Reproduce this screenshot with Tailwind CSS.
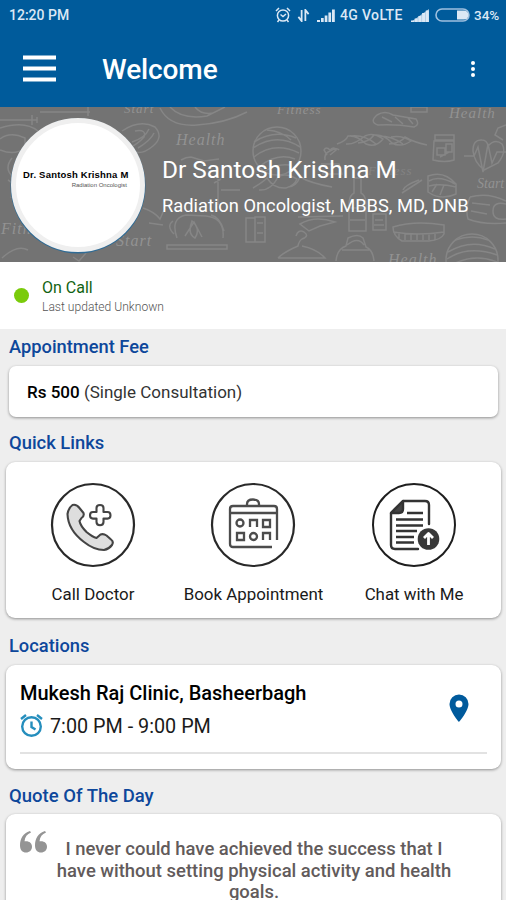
<!DOCTYPE html>
<html lang="en">
<head>
<meta charset="utf-8">
<title>Welcome</title>
<script src="https://cdn.jsdelivr.net/npm/@tailwindcss/browser@4"></script>
</head>
<body class="h-[900px] overflow-hidden bg-[#eeeeee] font-['Roboto',sans-serif] text-[#1a1a1a]">
<header class="h-[107px] bg-[#005b9b] text-white">
  <div class="flex h-[30px] items-center pl-[9px] text-[14px] font-medium text-[#dbe8f5]">
    <span class="w-[266px] whitespace-nowrap">12:20 PM</span>
    <svg class="h-4 w-4 shrink-0" viewBox="0 0 16 16" fill="none" stroke="currentColor" stroke-width="1.5"><circle cx="8" cy="8.5" r="5.6"/><path d="M1 4 4 1M15 4l-3-3M5.5 7.5 8 9.5l3-2.5M4 13l-1.500 2M12 13l1.500 2"/></svg>
    <svg class="ml-[6px] h-[13px] w-[13px] shrink-0" viewBox="0 0 13 14" fill="none" stroke="currentColor" stroke-width="1.900"><path d="M4.500 1v12L1 8.500M8.500 13V1L12 5.500"/></svg>
    <svg class="ml-[7px] h-[13px] w-[18px] shrink-0" viewBox="0 0 18 13" fill="currentColor"><path d="M0 11h3v2H0zM4 9h2.700v4H4zM7.700 6.500h2.700V13H7.700zM11.400 3.500h2.700V13h-2.700zM15 0.500h2.800V13H15z"/></svg>
    <span class="ml-[5px] w-[65px] whitespace-nowrap tracking-[0.35px]">4G VoLTE</span>
    <svg class="ml-[6px] h-[13px] w-[18px] shrink-0" viewBox="0 0 18 13" fill="currentColor"><path fill-opacity=".75" d="M0 13 18 0v13z"/><path d="M0 11.500h3V13H0zM3.700 9.500h3V13h-3zM7.400 7h3v6h-3zM11.100 4h3v9h-3zM14.800 1.500h3V13h-3z"/></svg>
    <svg class="ml-[6px] h-[14px] w-[35px] shrink-0" viewBox="0 0 35 14"><rect x="1" y="1" width="33" height="12" rx="6" fill="none" stroke="#9fc0df" stroke-width="1.600"/><path d="M22 2.500h7a4.500 4.500 0 0 1 0 9h-7z" fill="#dbe8f5"/></svg>
    <span class="mt-px ml-[4px] text-[13.500px]">34%</span>
  </div>
  <div class="flex h-[77px] items-center pl-[23px] pr-[24px]">
    <svg class="h-[28px] w-[33px]" viewBox="0 0 33 28" fill="#fff"><path d="M0 0.500h33v4H0zM0 11.500h33v4H0zM0 22.500h33v4H0z"/></svg>
    <h1 class="mt-[2px] ml-[46px] flex-1 text-[28px] font-medium tracking-[-0.1px]">Welcome</h1>
    <svg class="h-[16px] w-[18px]" viewBox="0 0 18 16" fill="#fff"><circle cx="9" cy="2" r="2"/><circle cx="9" cy="8" r="2"/><circle cx="9" cy="14" r="2"/></svg>
  </div>
</header>

<section class="relative h-[155px] overflow-hidden bg-[#737373]">
  <svg class="absolute inset-0 h-[155px] w-[506px]" viewBox="0 107 506 155" fill="none" stroke="#868686" stroke-width="1.500">
    <g fill="#929292" stroke="none" font-family="Liberation Serif, serif" font-style="italic" font-size="16" letter-spacing="1">
      <text x="176" y="145">Health</text><text x="277" y="114" font-size="13">Fitness</text><text x="449" y="118" font-size="15">Health</text><text x="368" y="175" font-size="13" fill="#838383">Fitness</text><text x="477" y="188" font-size="14" letter-spacing="0">Start</text><text x="116" y="246">Start</text><text x="1" y="234">Fitness</text><text x="124" y="113" font-size="13">Start</text><text x="388" y="265">Health</text>
    </g>
    <path d="M0 120h37M32 115v10M37 117v6M0 128q25-8 38 3M40 112h50M88 107v9M0 139q10-8 25-1v10q-10 8-25 2M12 158q-8 10 0 18M8 180q9 5 3 18M2 258q15-14 26-8M73 257l6 4 7-8"/>
    <path d="M122 131q18-12 33-4 9 10-2 19-14 12-24 2 9-4 15-11 3-8-9-6M132 142q13-4 17-13M138 148q13-8 16-15M160 108q9 19 37 17 29-2 50-13M170 107q12 13 37 9l18-9M195 107q6 8 18 6"/>
    <circle cx="277" cy="151" r="24"/><path d="M254 142q20-13 42-4M253 148q24-16 47-1M254 157q20-16 45-4M259 167q18-15 36-8M267 130q15 1 24 10M264 172q12-9 26-7"/>
    <path d="M337 144q9-3 11-8 9-1 18 8 10 4 17-5-10-7-18-3-11 9-19 8M358 143q11-1 16-8 10-1 18 8 9 5 19-2-9-6-20-4M389 144q12-1 16-7 8 5 22 8M350 136q14-2 26 8M379 136q13 0 24 8"/>
    <path d="M253 188q10-6 14-10 7 11 19 10 8-2 11-9-12-7-19-2-7 14-19 13M288 187q8 0 12-10 10 6 32 10"/>
    <path d="M435 135h19v5h-19zM434 141h20v19q-9 3-21 0zM437 148h8v7h-8zM446 144h6v8h-6zM440 157l9-5"/>
    <path d="M464 156h10l4-9 5 25 5-28 4 19 5-11h9M473 151q0-12 9-11 5 0 6 6 7-8 14-2 5 8-4 19l-14 7q-10-8-11-19M506 125l-8 3-3 7 8 5"/>
    <path d="M377 115q8-5 16 0l23 4q4 6-2 8-17-3-36-2-9-3-1-10zM382 117l10 5M395 117l8 7M408 118l5 6M411 107h16v5h-16z"/>
    <path d="M402 193l20-13M403 190q2-5 16-10M428 176q16-6 28 8v10q-15 7-28-2zM429 181q10-6 26 3M429 186q11-3 27 1M432 192l5-8M440 195l4-10"/>
    <path d="M354 178h7v15q4 2 5 9v29h-17v-29q1-7 5-9zM350 208h15M350 220h15M373 214h13v16h-13zM375 220h8M374 225h10M321 164h18l3 10h-20M325 160q-1-7 5-9 7-4 9-1M327 155l-3-5q2-4 6 0 4-4 6 0l-6 5"/>
    <path d="M393 227q22-7 51-2v9q-3 6-15 7h-27q-9-5-9-14zM393 232q25 4 51 0M399 233v6M405 234v6M411 234v6M417 234v6M423 234v6M429 234v6M435 234v6"/>
    <path d="M278 258q6-6 20-12 1-5 4-7 8-3 2-7-6-3-8 4M278 258h47q-8-9-23-12M336 261q1-12 10-15l2-8q10-5 15 0l3 9q7 3 8 14M342 250h28M347 245q11-9 17 0"/>
    <circle cx="472" cy="260" r="26"/><path d="M448 252q23-14 47-3M447 259q21-14 50-4M455 240q18-6 33 0M448 267q24-15 49-5"/>
    <path d="M470 197q18-5 36 4M470 197q-5 11-2 22 15 6 38 4M493 211q0-10 13-7M493 211q0 10 13 8M472 203l18 2M471 211l16 3"/>
    <path d="M177 238q-7-20 9-23l20 1q19 2 17 22M167 245h60v4h-60zM185 236l9-14 8 15M195 238q-8-4-3-17 9 8 3 17zM174 234q-8-8-1-13M224 231q-4-14-13-16M246 218h9v24h-9zM143 208q12 4 17 11l4-9M149 223l14 2M214 183l7-4M218 179v26M221 190h19M255 217h10v25h-10zM257 223h6M257 233h6"/>
    <path d="M298 217l45-1M300 224q15-9 35-2l-15 4-11 5zM181 160q5-3 10-3l13 4 15-2"/>
  </svg>
  <div class="relative flex h-full items-center pl-[11px]">
    <div class="flex h-[134px] w-[134px] shrink-0 flex-col justify-center rounded-full border-[5px] border-[#efefef] bg-white text-black shadow-[0_1px_0_0.5px_#2f6b95]">
      <div class="mt-[-11px] whitespace-nowrap pl-[7px] font-['Liberation_Sans',sans-serif] text-[9.500px] leading-[12px] font-bold tracking-[0.2px]">Dr. Santosh Krishna M</div>
      <div class="whitespace-nowrap pr-[13px] text-right font-['Liberation_Sans',sans-serif] text-[6px] leading-[9px] text-[#555]">Radiation Oncologist</div>
    </div>
    <div class="mt-[3px] ml-[17px] whitespace-nowrap text-white">
      <div class="text-[24.4px] leading-[30px]">Dr Santosh Krishna M</div>
      <div class="mt-[9px] text-[18.3px] leading-[24px]">Radiation Oncologist, MBBS, MD, DNB</div>
    </div>
  </div>
</section>

<section class="flex h-[67px] items-center bg-white pl-[14px]">
  <div class="h-[15px] w-[15px] rounded-full bg-[#7acb0b]"></div>
  <div class="ml-[13px] mt-[3px]">
    <div class="text-[16px] leading-[20px] text-[#126312]">On Call</div>
    <div class="text-[12.1px] leading-[18px] font-light text-[#555]">Last updated Unknown</div>
  </div>
</section>

<h2 class="flex h-[37px] items-center pb-[2px] pl-[9px] text-[18.3px] font-medium text-[#0d479b]">Appointment Fee</h2>
<section class="mr-[8px] ml-[9px] flex h-[51px] items-center rounded-[7px] bg-white pt-[2px] pl-[18px] text-[17px] shadow-[0_1px_3px_rgba(0,0,0,0.4)]">
  <p class="whitespace-nowrap"><b class="font-medium text-black">Rs 500</b> <span class="text-[#333]">(Single Consultation)</span></p>
</section>

<h2 class="flex h-[45px] items-center pt-[7px] pl-[9px] text-[18.4px] font-medium text-[#0d479b]">Quick Links</h2>
<section class="mr-[5px] ml-[6px] grid h-[156px] grid-cols-[174px_147px_174px] rounded-[9px] bg-white pt-[20px] text-center text-[16.9px] shadow-[0_1px_3px_rgba(0,0,0,0.4)]">
  <div class="flex flex-col items-center">
    <svg class="h-[86px] w-[86px]" viewBox="0 0 86 86" fill="none" stroke="#444" stroke-width="2.100" stroke-linecap="round" stroke-linejoin="round"><circle cx="43" cy="43" r="41" stroke="#292929" stroke-width="2.200"/><path fill="#dedede" d="M17.500 32q1-6 5-9 4-1 7 3l4 5q1 3-2 5l-2 3q1 5 7 11 6 5 10 6l4-3.500q3-1 6 1l4.500 4q3 2 1 5.500-3 4-8 5-10 0-20-8-16-12-16.500-28z"/><path d="M47 27q0-3 3.500-3t3.500 3v4h4q3 0 3 3.300t-3 3.300h-4v3.500q0 3.200-3.500 3.200t-3.500-3.200v-3.500h-3.500q-3 0-3-3.300t3-3.300h3.500z" transform="translate(-.5 -1)"/></svg>
    <div class="mt-[15px] leading-[22px]">Call Doctor</div>
  </div>
  <div class="flex flex-col items-center">
    <svg class="-ml-px h-[86px] w-[86px]" viewBox="0 0 86 86" fill="none" stroke="#4c4c4c" stroke-width="2.300"><circle cx="43" cy="43" r="41" stroke="#292929" stroke-width="2.200"/><path d="M37 24v-2q0-4.500 6-4.500t6 4.500v2M67 58V27q0-3-3-3H23q-3 0-3 3v35q0 3 3 3h39M20 31h47"/><circle cx="30" cy="41" r="3.500"/><path d="M40 45v-7h7v7M53 38h7v7h-7zM27 51h7v7h-7z"/><circle cx="43.500" cy="54.500" r="3.500"/><path d="M53 58v-7h7v7"/></svg>
    <div class="mt-[15px] whitespace-nowrap leading-[22px]">Book Appointment</div>
  </div>
  <div class="flex flex-col items-center">
    <svg class="-ml-px h-[86px] w-[86px]" viewBox="0 0 86 86" fill="none" stroke="#333" stroke-width="2.400" stroke-linecap="round" stroke-linejoin="round"><circle cx="43" cy="43" r="41" stroke="#1e1e1e" stroke-width="2"/><path d="M58 42V23q0-4-4-4H32L20 31v32q0 4 4 4h23"/><path fill="#444" d="M32 19v8q0 4-4 4h-8z"/><path stroke-linecap="butt" d="M36 31h16M25 37.500h27M25 43.500h27M25 49h21M25 55h18M25 60.500h18"/><circle cx="57.500" cy="57" r="10.800" fill="#383838" stroke="none"/><path d="M57.500 63V51.500m-4.500 4.500 4.500-4.500 4.500 4.500" stroke="#fff" stroke-width="2.800" stroke-linecap="butt"/></svg>
    <div class="mt-[15px] whitespace-nowrap leading-[22px]">Chat with Me</div>
  </div>
</section>

<h2 class="flex h-[47px] items-center pt-[9px] pl-[9px] text-[18.3px] font-medium text-[#0d479b]">Locations</h2>
<section class="mr-[5px] ml-[6px] h-[104px] rounded-[9px] bg-white px-[14px] pt-[14px] shadow-[0_1px_3px_rgba(0,0,0,0.4)]">
  <div class="flex h-[75px] border-b-[2px] border-[#e2e2e2]">
    <div class="flex-1">
      <div class="text-[20px] leading-[28px] font-medium text-black">Mukesh Raj Clinic, Basheerbagh</div>
      <div class="mt-[5px] flex items-center text-[19.8px] leading-[30px]">
        <svg class="mt-[-4px] mr-[7px] h-[23px] w-[23px]" viewBox="0 0 23 23" fill="none" stroke="#258ebd" stroke-width="2.400"><circle cx="11.500" cy="12.500" r="9.300"/><path d="M1 5 6 1M22 5l-5-4M11.500 7.500V13l4 2.500"/></svg>
        <span class="whitespace-nowrap">7:00 PM - 9:00 PM</span>
      </div>
    </div>
    <svg class="mt-[15px] mr-[18px] h-[28px] w-[20px]" viewBox="0 0 20 28"><path fill="#005a9c" fill-rule="evenodd" d="M10 0.500a9.500 9.500 0 0 0-9.500 9.500c0 7 9.500 18 9.500 18s9.500-11 9.500-18A9.500 9.500 0 0 0 10 .5zm0 6a3.500 3.500 0 1 1 0 7 3.500 3.500 0 0 1 0-7z"/></svg>
  </div>
</section>

<h2 class="flex h-[45px] items-center pt-[10px] pl-[9px] text-[18.500px] font-medium text-[#0d479b]">Quote Of The Day</h2>
<section class="mr-[5px] ml-[6px] flex h-[130px] rounded-[9px] bg-white pt-[17px] pl-[14px] shadow-[0_1px_3px_rgba(0,0,0,0.4)]">
  <svg class="h-[22px] w-[27px] shrink-0" viewBox="0 0 27 22" fill="#949494"><path d="M10 0C3 2 0 8 0 14.500 0 19 2.500 21.500 6 21.500s6-2.500 6-5.800-2.400-5.500-6-5.500H4.500C5 6 7 3 11 1.500z"/><path d="M25 0c-7 2-10 8-10 14.500 0 4.500 2.500 7 6 7s6-2.500 6-5.800-2.400-5.500-6-5.500h-1.500C20 6 22 3 26 1.500z"/></svg>
  <p class="mt-[8px] ml-[3px] w-[408px] text-center text-[18.450px] leading-[21.500px] font-medium text-[#625b5b]">I never could have achieved the success that I<br>have without setting physical activity and health<br>goals.</p>
</section>
</body>
</html>
